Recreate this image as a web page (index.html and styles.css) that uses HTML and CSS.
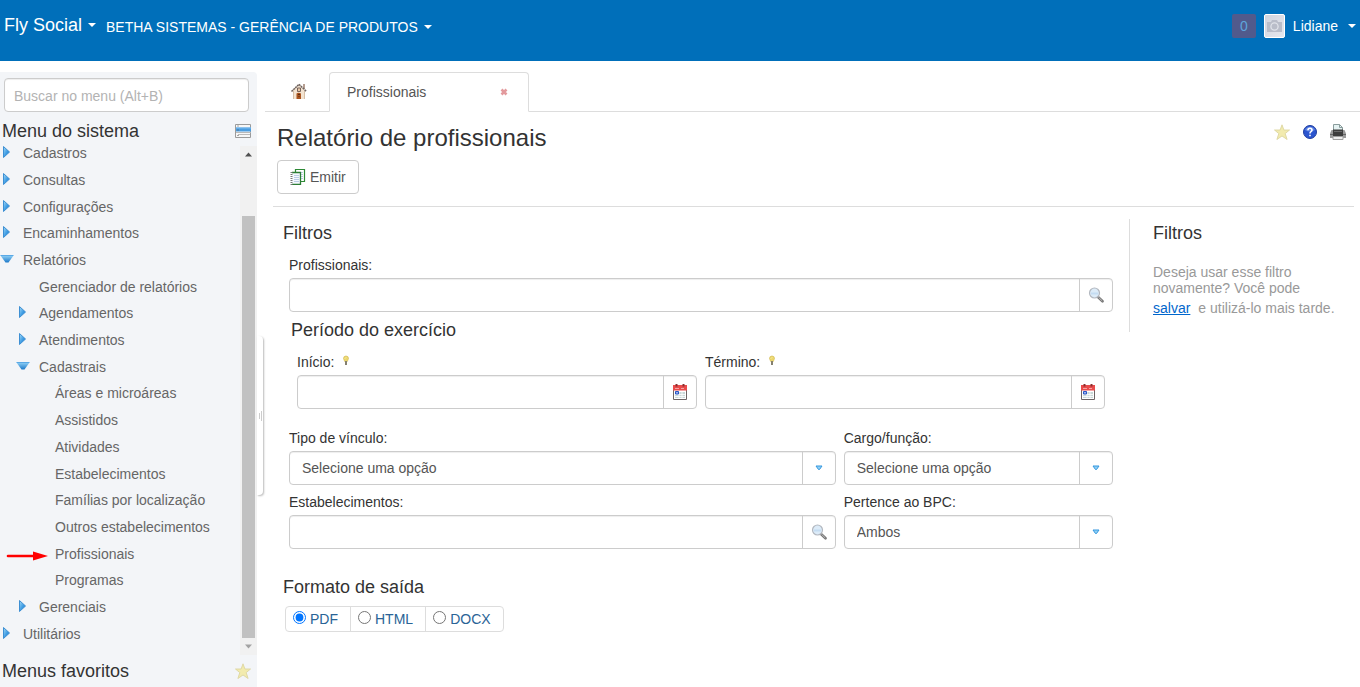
FILE: index.html
```html
<!DOCTYPE html>
<html lang="pt-BR">
<head>
<meta charset="utf-8">
<meta name="viewport" content="width=device-width, initial-scale=1">
<title>Fly Social - Relatório de profissionais</title>
<link rel="stylesheet" href="styles.css">
</head>
<body>
<svg class="defs" aria-hidden="true">
  <defs>
    <linearGradient id="blue" x1="0" y1="0" x2="1" y2="1"><stop offset="0" stop-color="#a5dcf8"/><stop offset=".55" stop-color="#3d9be3"/><stop offset="1" stop-color="#1c78c8"/></linearGradient>
    <linearGradient id="blue-down" x1="0" y1="0" x2="0" y2="1"><stop offset="0" stop-color="#8fd0f6"/><stop offset="1" stop-color="#1c78c8"/></linearGradient>
    <linearGradient id="photo" x1="0" y1="0" x2="1" y2="1"><stop offset="0" stop-color="#cfd3de"/><stop offset="1" stop-color="#e6e8ee"/></linearGradient>
    <symbol id="closed" viewBox="0 0 14 14"><path d="M3.500 1.500v11l6-5.500z" fill="url(#blue)" stroke="#3d8fd3"/></symbol>
    <symbol id="open" viewBox="0 0 14 14"><path d="M.5 3.500h13L8.500 10.500h-3z" fill="url(#blue-down)"/><path d="M.5 3.500h13" stroke="#5aa9e6"/></symbol>
    <symbol id="star" viewBox="0 0 16 16"><path d="M8 .8l1.900 5.200h5.600l-4.300 3.600 1.900 5.900L8 12 2.900 15.500l1.900-5.900L.5 6h5.600z" fill="#f2ebae" stroke="#ddd6a0" stroke-width=".9"/></symbol>
    <symbol id="lens" viewBox="0 0 16 16"><path d="M10 10l4.500 4.300" stroke="#777" stroke-width="2.600" stroke-linecap="round"/><path d="M10.500 10.300l3.700 3.600" stroke="#bbb" stroke-width="1"/><circle cx="6.500" cy="6" r="5" fill="#dcebf8" stroke="#b3b8c0" stroke-width="1.200"/><path d="M3 6.500h7" stroke="#c4dcf2" stroke-width="2"/></symbol>
    <symbol id="calendar" viewBox="0 0 16 16"><path d="M1.500 3h13v12.500h-13z" fill="#fff" stroke="#6d6565"/><path d="M1 1h14v5.500H1z" fill="#e94b4b"/><path d="M3 4.500h4M9 4.500h3" stroke="#f6a4a4"/><path d="M4.500 0v2.500M11.500 0v2.500" stroke="#8a3030" stroke-width="2"/><path d="M3 8h10v6H3z" fill="#c9d8d8"/><path d="M3 10.500h10M3 12.500h10M7 8v6M10 8v6" stroke="#fff" stroke-width=".8"/><path d="M3.500 7.500h3v2.500h-3z" fill="#9bb4ef" stroke="#2855c5"/></symbol>
    <symbol id="bulb" viewBox="0 0 8 12"><path d="M1.500 3.500a2.500 2.500 0 0 1 5 0L5.300 6.500H2.700z" fill="#ecd76c" stroke="#d4bd5a" stroke-width=".7"/><path d="M3 3.500l1-1" stroke="#fff8c5"/><path d="M3 6h2v4H3z" fill="#85806f"/></symbol>
    <symbol id="drop" viewBox="0 0 8 6"><path d="M1 1h6L4.500 4.500h-1z" fill="#8fd0f5" stroke="#3597df"/></symbol>
  </defs>
</svg>

<header class="topbar">
  <button class="brand" type="button">Fly Social <span class="caret"></span></button>
  <button class="entity" type="button">BETHA SISTEMAS - GERÊNCIA DE PRODUTOS <span class="caret"></span></button>
  <div class="account">
    <span class="badge">0</span>
    <svg class="avatar" viewBox="0 0 21 24" aria-hidden="true"><rect x=".5" y=".5" width="20" height="23" rx="1.500" fill="url(#photo)" stroke="#fff"/><path d="M3 8h4l1-2h5l1 2h4v10H3z" fill="#b9bdc9"/><circle cx="10.500" cy="12.500" r="3.600" fill="#b9bdc9" stroke="#dfe2e9" stroke-width="1.300"/></svg>
    <button class="user" type="button">Lidiane <span class="caret"></span></button>
  </div>
</header>

<div class="workspace">
  <aside class="sidebar">
    <input class="menu-search" type="search" aria-label="Buscar no menu" placeholder="Buscar no menu (Alt+B)">
    <div class="side-title">
      <h2>Menu do sistema</h2>
      <button class="icon-button" type="button" aria-label="Alternar menu"><svg width="16" height="16" viewBox="0 0 16 16"><path d="M.5 1.500h15v13H.5z" fill="#f7f7f7" stroke="#9b9b9b"/><path d="M1 4.500h15v4H1z" fill="#4a9de0"/><path d="M1 5h15" stroke="#7bbcf0"/><path d="M3 11.500h12M1 9.500h15" stroke="#b9b9b9"/><path d="M2.500 3h1M2.500 7h1M2.500 12.500h1" stroke="#555"/></svg></button>
    </div>
    <div class="menu-area">
      <ul class="menu">
        <li><svg><use href="#closed"/></svg><a href="#">Cadastros</a></li>
        <li><svg><use href="#closed"/></svg><a href="#">Consultas</a></li>
        <li><svg><use href="#closed"/></svg><a href="#">Configurações</a></li>
        <li><svg><use href="#closed"/></svg><a href="#">Encaminhamentos</a></li>
        <li><svg><use href="#open"/></svg><a href="#">Relatórios</a></li>
        <li class="leaf level-2"><a href="#">Gerenciador de relatórios</a></li>
        <li class="level-2"><svg><use href="#closed"/></svg><a href="#">Agendamentos</a></li>
        <li class="level-2"><svg><use href="#closed"/></svg><a href="#">Atendimentos</a></li>
        <li class="level-2"><svg><use href="#open"/></svg><a href="#">Cadastrais</a></li>
        <li class="leaf level-3"><a href="#">Áreas e microáreas</a></li>
        <li class="leaf level-3"><a href="#">Assistidos</a></li>
        <li class="leaf level-3"><a href="#">Atividades</a></li>
        <li class="leaf level-3"><a href="#">Estabelecimentos</a></li>
        <li class="leaf level-3"><a href="#">Famílias por localização</a></li>
        <li class="leaf level-3"><a href="#">Outros estabelecimentos</a></li>
        <li class="leaf level-3"><svg class="pointer" viewBox="0 0 42 10" aria-hidden="true"><path d="M2 5h28" stroke="#f00" stroke-width="2.600" stroke-linecap="round"/><path d="M27 .5L42 5 27 9.500z" fill="#f00"/></svg><a href="#">Profissionais</a></li>
        <li class="leaf level-3"><a href="#">Programas</a></li>
        <li class="level-2"><svg><use href="#closed"/></svg><a href="#">Gerenciais</a></li>
        <li><svg><use href="#closed"/></svg><a href="#">Utilitários</a></li>
      </ul>
      <div class="scrollbar" aria-hidden="true">
        <svg viewBox="0 0 15 17"><path d="M4 10.500l3.500-4 3.500 4z" fill="#505050"/></svg>
        <div class="thumb"></div>
        <svg viewBox="0 0 15 17"><path d="M4 6.500h7l-3.500 4z" fill="#a3a3a3"/></svg>
      </div>
    </div>
    <div class="side-title favorites">
      <h2>Menus favoritos</h2>
      <svg width="16" height="16"><use href="#star"/></svg>
    </div>
    <div class="splitter" aria-hidden="true"></div>
  </aside>

  <main class="content">
    <nav class="tabs">
      <a class="home" href="#" aria-label="Início"><svg width="18" height="18" viewBox="0 0 18 18"><path d="M3 8v9h12V8L9 3z" fill="#f3e3d0"/><path d="M13 2h2v5h-2z" fill="#b79f92"/><path d="M3.500 9v8M14.500 9v8" stroke="#d6bfa6"/><path d="M1.500 9.500L9 2.300l7.500 7.200" fill="none" stroke="#6e625d" stroke-width="1.500" stroke-dasharray="2 .6"/><path d="M7.500 6h3v3.500h-3z" fill="#e8c9a8" stroke="#78655d"/><path d="M6.500 11.500q2-1.500 4.500 0V17H6.500z" fill="#a9541f"/><path d="M8 12.500h2M8.500 14.500h1" stroke="#5d2b12"/></svg></a>
      <div class="tab"><a href="#">Profissionais</a><button class="close" type="button" aria-label="Fechar aba"><svg width="8" height="8" viewBox="0 0 8 8"><path d="M1.500 1.500l5 5M6.500 1.500l-5 5" stroke="#e39a9d" stroke-width="2.600"/></svg></button></div>
    </nav>

    <div class="page-head">
      <div class="title-row">
        <h1>Relatório de profissionais</h1>
        <div class="tools">
          <button class="icon-button" type="button" aria-label="Favoritar"><svg width="16" height="16"><use href="#star"/></svg></button>
          <button class="icon-button" type="button" aria-label="Ajuda"><svg width="16" height="16" viewBox="0 0 16 16"><circle cx="8" cy="8" r="6.500" fill="#2b55cf" stroke="#203f9f"/><path d="M3 6a5.500 5.500 0 0 1 10 0q-5 3-10 0z" fill="#6287e4"/><path d="M6 6.300q0-2 2-2t2 1.700q0 1-1 1.600T8 9.500M8 10.700v1.600" fill="none" stroke="#fff" stroke-width="1.600"/></svg></button>
          <button class="icon-button" type="button" aria-label="Imprimir"><svg width="16" height="16" viewBox="0 0 16 16"><path d="M3.500 7V.5h6l3 3V7z" fill="#e5f2f2" stroke="#8a9c9c"/><path d="M9.500.5v3h3" fill="none" stroke="#8a9c9c"/><path d="M1.500 6h13L16 9.500V14H0V9.500z" fill="#9a9a9a"/><path d="M3 5.500h10v6.500H3z" fill="#3d3d3d"/><path d="M4 7.500h8" stroke="#6a6a6a"/><path d="M0 10.500h3M13 10.500h3" stroke="#666"/><path d="M3 12.500h10v3H3z" fill="#ededed" stroke="#a0a0a0"/></svg></button>
        </div>
      </div>
      <button class="emit" type="button"><svg width="16" height="16" viewBox="0 0 16 16"><path d="M6 1h9v12H6z" fill="#fff"/><path d="M5.500 3V.5h9v12H11" fill="none" stroke="#2d8935" stroke-width="1.200"/><path d="M8 3.500h5M11 5.500h2M11 7.500h2M11 9.500h2" stroke="#bdcce7"/><path d="M2 3.500h8.500v12H2z" fill="#f4f7fd"/><path d="M2 3.500h8.500v12H2" fill="none" stroke="#2d7d35" stroke-width="1.300"/><path d="M4 6.500h5M4 8.500h5M4 10.500h5M4 12.500h5" stroke="#bdcce7"/><path d="M1.500 3v13" stroke="#777" stroke-width="2" stroke-dasharray="1 1"/></svg>Emitir</button>
    </div>

    <div class="columns">
      <form class="filters">
        <h2>Filtros</h2>
        <div class="fields">
          <div class="field">
            <label for="prof">Profissionais:</label>
            <div class="control"><input id="prof" type="text"><button type="button" aria-label="Pesquisar profissionais"><svg width="16" height="16"><use href="#lens"/></svg></button></div>
          </div>
          <fieldset class="period">
            <legend>Período do exercício</legend>
            <div class="dates">
              <div class="field">
                <label for="start">Início: <svg width="8" height="12"><use href="#bulb"/></svg></label>
                <div class="control"><input id="start" type="text"><button type="button" aria-label="Escolher início"><svg width="16" height="16"><use href="#calendar"/></svg></button></div>
              </div>
              <div class="field">
                <label for="end">Término: <svg width="8" height="12"><use href="#bulb"/></svg></label>
                <div class="control"><input id="end" type="text"><button type="button" aria-label="Escolher término"><svg width="16" height="16"><use href="#calendar"/></svg></button></div>
              </div>
            </div>
          </fieldset>
          <div class="options">
            <div class="field">
              <label for="bond">Tipo de vínculo:</label>
              <div class="control"><select id="bond"><option>Selecione uma opção</option></select><span class="arrow"><svg width="8" height="6"><use href="#drop"/></svg></span></div>
            </div>
            <div class="field">
              <label for="role">Cargo/função:</label>
              <div class="control"><select id="role"><option>Selecione uma opção</option></select><span class="arrow"><svg width="8" height="6"><use href="#drop"/></svg></span></div>
            </div>
            <div class="field">
              <label for="place">Estabelecimentos:</label>
              <div class="control"><input id="place" type="text"><button type="button" aria-label="Pesquisar estabelecimentos"><svg width="16" height="16"><use href="#lens"/></svg></button></div>
            </div>
            <div class="field">
              <label for="bpc">Pertence ao BPC:</label>
              <div class="control"><select id="bpc"><option>Ambos</option><option>Sim</option><option>Não</option></select><span class="arrow"><svg width="8" height="6"><use href="#drop"/></svg></span></div>
            </div>
          </div>
        </div>
        <h2 id="format">Formato de saída</h2>
        <div class="formats" role="radiogroup" aria-labelledby="format">
          <label><input type="radio" name="format" checked>PDF</label>
          <label><input type="radio" name="format">HTML</label>
          <label><input type="radio" name="format">DOCX</label>
        </div>
      </form>
      <aside class="saved">
        <h2>Filtros</h2>
        <p>Deseja usar esse filtro novamente? Você pode</p>
        <div class="save-line"><a href="#">salvar</a><span>e utilizá-lo mais tarde.</span></div>
      </aside>
    </div>
  </main>
</div>
</body>
</html>
```

FILE: styles.css
```css
* { box-sizing: border-box; }

body {
  margin: 0;
  min-height: 100vh;
  display: flex;
  flex-direction: column;
  background: #fff;
  color: #333;
  font: 14px/20px "Liberation Sans", Arial, sans-serif;
}

button, input, select { font: inherit; color: inherit; }
button { padding: 0; border: 0; background: none; cursor: pointer; }
h1, h2, p, ul { margin: 0; }
h1, h2, legend { font-weight: normal; }
h2, legend { font-size: 18px; line-height: 20px; }
svg { display: block; flex: none; }
.defs { position: absolute; width: 0; height: 0; }
.icon-button { display: block; }

/* Top bar */
.topbar {
  display: flex;
  align-items: flex-start;
  height: 61px;
  padding: 14px 4px 0;
  background: #006fba;
  color: #fff;
}
.topbar button { display: flex; align-items: center; gap: 6px; line-height: 24px; }
.topbar .brand { font-size: 18px; line-height: 22px; margin-right: 10px; }
.topbar .entity { line-height: 26px; }
.caret { border: 4px solid transparent; border-top-color: currentColor; border-bottom: 0; }
.account { display: flex; gap: 8px; margin-left: auto; }
.badge {
  width: 24px;
  line-height: 24px;
  text-align: center;
  border-radius: 2px;
  background: #515a8c;
  color: #5ea5dc;
}
.avatar { width: 21px; height: 24px; }
.topbar .user { gap: 10px; }

.workspace { flex: 1; display: flex; gap: 8px; padding-top: 11px; }

/* Side menu */
.sidebar {
  position: relative;
  flex: none;
  display: flex;
  flex-direction: column;
  width: 257px;
  padding-top: 6px;
  border-radius: 0 4px 0 0;
  background: #f3f5f8;
}
.menu-search {
  height: 34px;
  margin: 0 8px 0 4px;
  padding: 2px 9px 0;
  border: 1px solid #ccc;
  border-radius: 4px;
  background: #fff;
  box-shadow: inset 0 1px 1px #eee;
}
.menu-search::placeholder { color: #b3b3b3; }
.side-title {
  display: flex;
  align-items: center;
  justify-content: space-between;
  height: 28px;
  padding: 10px 6px 0 2px;
}
.favorites { height: 32px; padding-top: 0; }
.menu-area { flex: 1; display: flex; }
.menu {
  flex: 1;
  display: grid;
  grid-auto-rows: 1fr;
  margin-bottom: 8px;
  padding: 0;
  list-style: none;
}
.menu li { position: relative; display: flex; align-items: center; gap: 9px; }
.menu li svg { width: 14px; height: 14px; margin-bottom: 2px; }
.menu .leaf { padding-left: 23px; }
.menu .level-2 { padding-left: 16px; }
.menu .leaf.level-2 { padding-left: 39px; }
.menu .level-3 { padding-left: 55px; }
.menu a { color: #666; text-decoration: none; }
.menu li .pointer { position: absolute; left: 6px; top: 11px; width: 42px; height: 10px; }
.scrollbar {
  display: flex;
  flex-direction: column;
  width: 17px;
  margin-top: 6px;
  background: #f1f1f1;
}
.scrollbar svg { width: 17px; height: 17px; }
.thumb { flex: 1; margin: 53px 2px 0; background: #c1c1c1; }
.splitter {
  position: absolute;
  left: 100%;
  top: 43%;
  width: 6px;
  height: 159px;
  border-radius: 0 4px 4px 0;
  background: linear-gradient(#ccc, #ccc) 2px 50% / 1px 6px no-repeat, linear-gradient(#ccc, #ccc) 4px 50% / 1px 10px no-repeat, #fff;
  box-shadow: 1px 1px 2px #bbb;
}

/* Tabs */
.content { flex: 1; min-width: 0; }
.tabs { display: flex; height: 40px; border-bottom: 1px solid #ddd; }
.home { padding: 10px 20px 0 25px; width: 64px; }
.tab {
  display: flex;
  align-items: center;
  justify-content: space-between;
  width: 200px;
  height: 40px;
  padding: 0 20px 0 17px;
  border: 1px solid #ddd;
  border-bottom-color: #fff;
  border-radius: 4px 4px 0 0;
}
.tab a { color: #555; text-decoration: none; }

/* Page heading */
.page-head {
  margin: 0 6px 0 8px;
  padding: 12px 8px 12px 4px;
  border-bottom: 1px solid #ddd;
}
.title-row { display: flex; justify-content: space-between; margin-bottom: 8px; }
h1 { font-size: 24px; line-height: 28px; }
.tools { display: flex; align-items: flex-start; gap: 12px; }
.emit {
  display: flex;
  align-items: center;
  gap: 4px;
  height: 34px;
  padding: 0 12px;
  border: 1px solid #ccc;
  border-radius: 4px;
  color: #555;
}

/* Filters */
.columns { display: flex; align-items: flex-start; padding-top: 12px; }
.filters { flex: 1; padding: 4px 16px 0 18px; }
.fields { margin: 12px 0 28px; padding-left: 6px; }
.field label { display: flex; gap: 8px; margin-bottom: 3px; }
.field label svg { margin-top: 3px; }
.control {
  position: relative;
  display: flex;
  height: 34px;
  border: 1px solid #ccc;
  border-radius: 4px;
  box-shadow: inset 0 1px 1px #eee;
  color: #555;
}
.control input, .control select {
  flex: 1;
  min-width: 0;
  padding: 0 12px;
  border: 0;
  outline: 0;
  background: transparent;
  appearance: none;
}
.control button { display: grid; place-items: center; width: 33px; border-left: 1px solid #ccc; }
.arrow {
  position: absolute;
  inset: 0 0 0 auto;
  display: grid;
  place-items: center;
  width: 33px;
  border-left: 1px solid #ccc;
  pointer-events: none;
}
.period { min-width: 0; margin: 8px 0 19px; padding: 0 8px; border: 0; }
.period legend { margin-left: -6px; padding: 0; }
.dates { display: grid; grid-template-columns: 1fr 1fr; gap: 8px; margin-top: 12px; }
.options { display: grid; grid-template-columns: 67fr 33fr; gap: 7px 8px; }

/* Output format */
.formats {
  display: flex;
  width: max-content;
  margin: 9px 0 0 2px;
  border: 1px solid #ddd;
  border-radius: 4px;
  color: #2a6496;
}
.formats label { display: flex; gap: 4px; padding: 2px 12px 2px 7px; }
.formats label + label { border-left: 1px solid #ddd; }
.formats input { width: 13px; height: 13px; margin: 2px 0 0; }

/* Saved filters */
.saved {
  flex: none;
  width: 225px;
  min-height: 113px;
  margin-right: 6px;
  padding: 4px 0 0 23px;
  border-left: 1px solid #ddd;
  color: #999;
}
.saved h2 { margin-bottom: 21px; color: #333; }
.saved p { width: 160px; line-height: 16px; }
.save-line { display: flex; gap: 8px; margin-top: 2px; white-space: nowrap; }
.save-line a { color: #06c; }
```
